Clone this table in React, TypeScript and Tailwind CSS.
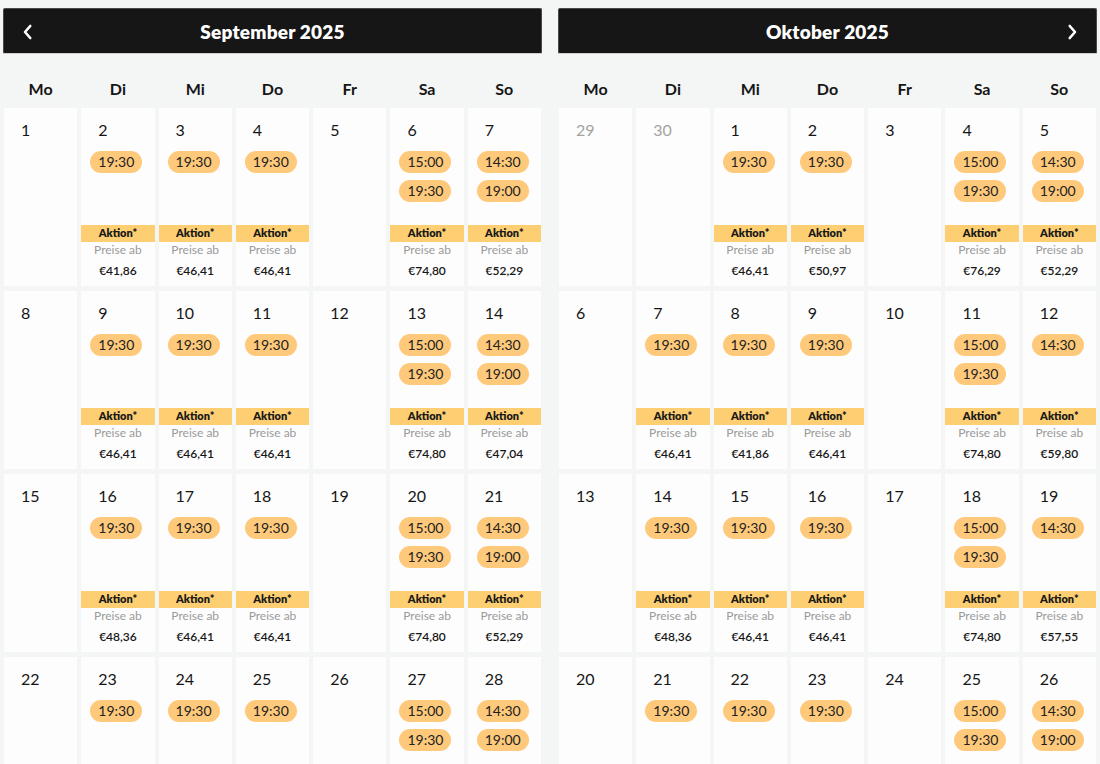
import React from "react";

type Day = { d: number; muted?: boolean; times?: string[]; price?: string };

const W = ["19:30"];
const SA = ["15:00", "19:30"];
const SO = ["14:30", "19:00"];

const sep: Day[][] = [
  [{ d: 1 }, { d: 2, times: W, price: "€41,86" }, { d: 3, times: W, price: "€46,41" }, { d: 4, times: W, price: "€46,41" }, { d: 5 }, { d: 6, times: SA, price: "€74,80" }, { d: 7, times: SO, price: "€52,29" }],
  [{ d: 8 }, { d: 9, times: W, price: "€46,41" }, { d: 10, times: W, price: "€46,41" }, { d: 11, times: W, price: "€46,41" }, { d: 12 }, { d: 13, times: SA, price: "€74,80" }, { d: 14, times: SO, price: "€47,04" }],
  [{ d: 15 }, { d: 16, times: W, price: "€48,36" }, { d: 17, times: W, price: "€46,41" }, { d: 18, times: W, price: "€46,41" }, { d: 19 }, { d: 20, times: SA, price: "€74,80" }, { d: 21, times: SO, price: "€52,29" }],
  [{ d: 22 }, { d: 23, times: W, price: "€46,41" }, { d: 24, times: W, price: "€46,41" }, { d: 25, times: W, price: "€46,41" }, { d: 26 }, { d: 27, times: SA, price: "€74,80" }, { d: 28, times: SO, price: "€52,29" }],
];

const okt: Day[][] = [
  [{ d: 29, muted: true }, { d: 30, muted: true }, { d: 1, times: W, price: "€46,41" }, { d: 2, times: W, price: "€50,97" }, { d: 3 }, { d: 4, times: SA, price: "€76,29" }, { d: 5, times: SO, price: "€52,29" }],
  [{ d: 6 }, { d: 7, times: W, price: "€46,41" }, { d: 8, times: W, price: "€41,86" }, { d: 9, times: W, price: "€46,41" }, { d: 10 }, { d: 11, times: SA, price: "€74,80" }, { d: 12, times: ["14:30"], price: "€59,80" }],
  [{ d: 13 }, { d: 14, times: W, price: "€48,36" }, { d: 15, times: W, price: "€46,41" }, { d: 16, times: W, price: "€46,41" }, { d: 17 }, { d: 18, times: SA, price: "€74,80" }, { d: 19, times: ["14:30"], price: "€57,55" }],
  [{ d: 20 }, { d: 21, times: W, price: "€46,41" }, { d: 22, times: W, price: "€46,41" }, { d: 23, times: W, price: "€46,41" }, { d: 24 }, { d: 25, times: SA, price: "€74,80" }, { d: 26, times: SO, price: "€52,29" }],
];

const labels = ["Mo", "Di", "Mi", "Do", "Fr", "Sa", "So"];

function Cell({ day }: { day: Day }) {
  return (
    <div className="flex h-[178px] flex-col bg-[#fdfdfd]">
      <div className={`pl-[17px] pt-[12px] text-[16px] leading-[20px] ${day.muted ? "text-[#a3a3a3]" : "text-[#161616]"}`}>
        {day.d}
      </div>
      {day.times && (
        <div className="mt-[11px] flex flex-col items-start gap-[7px] pl-[9px]">
          {day.times.map((t) => (
            <div key={t} className="flex h-[22px] items-center rounded-full bg-[#fec97a] px-[8px] text-[14px] leading-none text-[#222]">
              {t}
            </div>
          ))}
        </div>
      )}
      {day.price && (
        <div className="mt-auto flex flex-col items-center pb-[7px]">
          <div className="flex h-[17px] w-full items-center justify-center bg-[#fecf72] text-[11px] font-extrabold text-[#1a1a1a]">Aktion*</div>
          <div className="h-[16px] text-[12px] leading-[16px] text-[#9a9a9a]">Preise ab</div>
          <div className="mt-[5px] h-[16px] text-[12px] font-semibold leading-[16px] text-[#161616]">{day.price}</div>
        </div>
      )}
    </div>
  );
}

function Month({ title, rows, prev, next }: { title: string; rows: Day[][]; prev?: boolean; next?: boolean }) {
  return (
    <div className="flex flex-col">
      <div className="relative flex h-[46px] items-center justify-center rounded-[2px] border border-[#4a4a4a] border-b-[#cfcfcf] bg-[#161616] pt-[2px]">
        {prev && (
          <svg className="absolute left-[15px] top-[14px]" width="18" height="18" viewBox="0 0 24 24" fill="none" stroke="white" strokeWidth="3.5" strokeLinecap="round" strokeLinejoin="round">
            <path d="M15 4 L8 12 L15 20" />
          </svg>
        )}
        <span className="text-[19px] font-extrabold tracking-[0.2px] text-white">{title}</span>
        {next && (
          <svg className="absolute right-[15px] top-[14px]" width="18" height="18" viewBox="0 0 24 24" fill="none" stroke="white" strokeWidth="3.5" strokeLinecap="round" strokeLinejoin="round">
            <path d="M9 4 L16 12 L9 20" />
          </svg>
        )}
      </div>
      <div className="grid grid-cols-7 gap-x-[4px] px-[1px] pt-[24px] pb-[8px]">
        {labels.map((l) => (
          <div key={l} className="text-center text-[16px] font-bold leading-[22px] text-[#161616]">{l}</div>
        ))}
      </div>
      <div className="grid grid-cols-7 gap-x-[4px] gap-y-[5px] px-[1px]">
        {rows.flat().map((d, i) => (
          <Cell key={i} day={d} />
        ))}
      </div>
    </div>
  );
}

export default function App() {
  return (
    <div className="h-[764px] overflow-hidden bg-[#f4f5f5] px-[3px] pt-[8px]" style={{ fontFamily: "Lato, 'Open Sans', sans-serif" }}>
      <div className="grid grid-cols-2 gap-[16px]">
        <Month title="September 2025" rows={sep} prev />
        <Month title="Oktober 2025" rows={okt} next />
      </div>
    </div>
  );
}
